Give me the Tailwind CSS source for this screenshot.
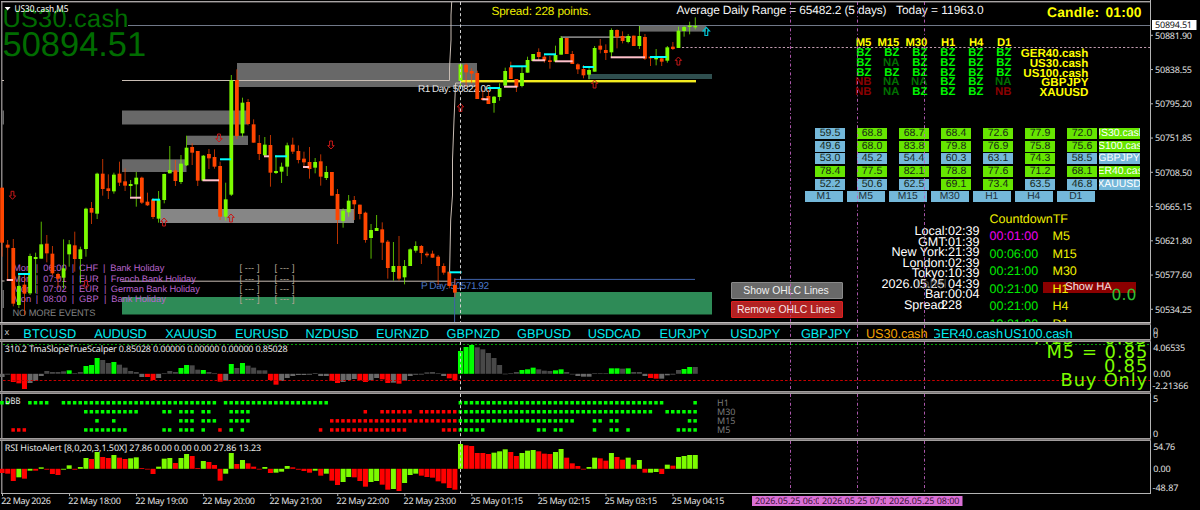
<!DOCTYPE html>
<html lang="en">
<head>
<meta charset="utf-8">
<title>US30.cash,M5</title>
<script src="https://cdn.jsdelivr.net/npm/@tailwindcss/browser@4"></script>
</head>
<body class="bg-black">
<main class="relative flex h-[510px] w-[1200px] flex-col overflow-hidden bg-black font-['Liberation_Sans',sans-serif] text-white [text-rendering:geometricPrecision]">

  <!-- price pane -->
  <section class="flex h-[322px]">
    <div class="relative w-[1151px] overflow-hidden border-r border-[#b4b4b4]">
      <svg id="price" class="absolute inset-0" width="1150" height="322" viewBox="0 0 1150 322">
        <rect x="1" y="1" width="1150" height="1.4" fill="#a8a4a4"/>
        <rect x="1.2" y="1" width="1.2" height="321" fill="#a8a4a4"/>
        <g fill="#686868">
          <rect x="2.4" y="110.5" width="1.6" height="14"/>
          <rect x="122" y="110.5" width="126" height="14"/>
          <rect x="122" y="159.3" width="64.5" height="12.7"/>
          <rect x="187" y="135.7" width="61" height="9.3"/>
          <rect x="237" y="63" width="240" height="24"/>
          <rect x="160" y="209" width="194" height="14" fill="#868686"/>
          <rect x="639" y="25.6" width="67" height="6"/>
          <rect x="561" y="36.3" width="70" height="1.7" fill="#808080"/>
          <rect x="2.4" y="290" width="1.6" height="18"/>
        </g>
        <rect x="588" y="74" width="124" height="5" fill="#2f4f4f"/>
        <path d="M122 297H455V292H712V314.5H122Z" fill="#2e8b57"/>
        <rect x="128" y="25" width="1022" height="1" fill="#707888"/>
        <path d="M2 80.5H4M122 80.5H449.5V68L451 40V15L451.7 2M2 281H4.5M122 281.2H449.5M449.6 272L450.7 220L452.5 195V160L454 120L455.6 83H460" fill="none" stroke="#c9bdb4"/>
        <path d="M454.6 322V279.4H695" fill="none" stroke="#3f62a8"/>
        <rect x="460" y="80" width="236" height="2.4" fill="#f4ec20"/>
        <path d="M682 47.5H1150" stroke="#c09aae" stroke-dasharray="2.2 2"/>
        <g id="labels" font-size="9.3">
          <text x="418" y="91.7" fill="#e4e4e4" font-size="10" textLength="73">R1 Day: 50822.06</text>
          <text x="421" y="289" fill="#4a78c8" font-size="10" textLength="68">P Day: 50571.92</text>
          <g fill="#b864cc">
            <text x="13" y="270.9">Mon</text><text x="35.7" y="270.9">|</text><text x="43.3" y="270.9">06:00</text><text x="71.7" y="270.9">|</text><text x="79" y="270.9">CHF</text><text x="103" y="270.9">|</text><text x="110.3" y="270.9" textLength="54">Bank Holiday</text>
            <text x="13" y="281.5">Mon</text><text x="35.7" y="281.5">|</text><text x="43.3" y="281.5">07:01</text><text x="71.7" y="281.5">|</text><text x="79" y="281.5">EUR</text><text x="104" y="281.5">|</text><text x="110.8" y="281.5" textLength="85">French Bank Holiday</text>
            <text x="13" y="291.9">Mon</text><text x="35.7" y="291.9">|</text><text x="43.3" y="291.9">07:02</text><text x="71.7" y="291.9">|</text><text x="79" y="291.9">EUR</text><text x="104" y="291.9">|</text><text x="110.8" y="291.9" textLength="89">German Bank Holiday</text>
            <text x="13" y="302.3">Mon</text><text x="35.7" y="302.3">|</text><text x="43.3" y="302.3">08:00</text><text x="71.7" y="302.3">|</text><text x="79" y="302.3">GBP</text><text x="104" y="302.3">|</text><text x="111.3" y="302.3" textLength="54.5">Bank Holiday</text>
          </g>
          <g fill="#b0a494">
            <text x="239.5" y="270.9" textLength="20">[ --- ]</text><text x="274.5" y="270.9" textLength="20">[ --- ]</text>
            <text x="239.5" y="281.5" textLength="20">[ --- ]</text><text x="274.5" y="281.5" textLength="20">[ --- ]</text>
            <text x="239.5" y="291.9" textLength="20">[ --- ]</text><text x="274.5" y="291.9" textLength="20">[ --- ]</text>
            <text x="239.5" y="302.3" textLength="20">[ --- ]</text><text x="274.5" y="302.3" textLength="20">[ --- ]</text>
          </g>
          <text x="12.4" y="316.4" fill="#808080" textLength="83">NO MORE EVENTS</text>
        </g>
        <g id="candles"></g>
        <g id="marks"></g>
        <text x="2.4" y="26.5" font-size="25.3" fill="#006c00" textLength="126">US30.cash</text>
        <text x="2.6" y="56.2" font-size="34.4" fill="#006c00" textLength="143.5">50894.51</text>
        <path d="M4.6 7H10.6L7.6 10.4Z" fill="#fff"/>
        <text x="14.5" y="12" font-size="9.4" fill="#fff" font-family="Noto Sans" textLength="54" lengthAdjust="spacingAndGlyphs">US30.cash,M5</text>
        <text x="491.4" y="14.9" font-size="11.8" fill="#f0f000" textLength="100">Spread: 228 points.</text>
        <text x="676.5" y="14" font-size="11.9" fill="#f4f4f4" textLength="210">Average Daily Range = 65482.2 (5 days)</text>
        <text x="896" y="14" font-size="11.9" fill="#f4f4f4" textLength="87.5">Today = 11963.0</text>
        <text x="1047" y="17.4" font-size="13.8" font-weight="bold" fill="#ff0" textLength="52">Candle:</text>
        <text x="1105.5" y="17.4" font-size="13.8" font-weight="bold" fill="#ff0" textLength="36">01:00</text>
      </svg>

      <!-- trend matrix -->
      <div class="absolute top-[39.2px] left-[843.4px] grid grid-cols-[repeat(6,28px)_77px] auto-rows-[9.8px] text-right text-[11.3px] leading-[9.8px] font-bold" id="matrix"></div>

      <!-- RSI heat map -->
      <div class="absolute top-[128.3px] left-[815px] flex flex-col gap-[1.6px]" id="heat"></div>
      <div class="absolute top-[191.4px] left-[805px] flex gap-[4.5px] text-[10.3px] leading-[11px] text-[#203038]" id="heatTf"></div>

      <!-- market clocks -->
      <div class="absolute top-[226.3px] left-[860px] flex w-[119.6px] flex-col text-right text-[12.6px] leading-[10.5px] whitespace-nowrap text-white">
        <span>Local:02:39</span><span>GMT:01:39</span><span>New York:21:39</span><span>London:02:39</span><span>Tokyo:10:39</span>
        <span class="relative">2026.05.25 04:39<span class="absolute right-[33px] text-[#777] opacity-60">Label</span></span>
        <span>Bar:00:04</span>
        <span class="relative pr-[17.5px]">228<span class="absolute right-[35px]">Spread</span></span>
      </div>

      <!-- candle countdown -->
      <div class="absolute top-[282px] left-[1043px] h-[11px] w-[93px] bg-[#8b0000]"></div>
      <div class="absolute top-[210.8px] left-[989.5px] text-[12.5px] leading-[17.5px]">
        <div class="text-[#f0f000]">CountdownTF</div>
        <div class="grid grid-cols-[63px_30px] text-[#00ec00]">
          <span class="text-[#f000f0]">00:01:00</span><span class="text-[#f0f000]">M5</span>
          <span>00:06:00</span><span class="text-[#f0f000]">M15</span>
          <span>00:21:00</span><span class="text-[#f0f000]">M30</span>
          <span>00:21:00</span><span class="text-[#f0f000]">H1</span>
          <span>00:21:00</span><span class="text-[#f0f000]">H4</span>
          <span>19:21:00</span><span class="text-[#f0f000]">D1</span>
        </div>
      </div>
      <div class="absolute top-[281px] left-[1065.3px] text-[11.1px] leading-[13px] text-[#f8e4e4]">Show HA</div>
      <div class="absolute top-[285px] left-[1111.5px] font-['DejaVu_Sans',sans-serif] text-[15.6px] leading-[20px] text-[#32c032]">0.0</div>

      <button class="absolute top-[281.5px] left-[731px] h-[17px] w-[112px] rounded-[1px] border border-[#8a8a8a] bg-[#696969] pr-[2px] text-[10.4px] leading-[15px] text-[#f0f0f0]">Show OHLC Lines</button>
      <button class="absolute top-[301.3px] left-[731px] h-[16.5px] w-[112px] rounded-[1px] border border-[#e02020] bg-[#b22222] pr-[2px] text-[10.4px] leading-[15px] whitespace-nowrap text-[#f8e8e8]">Remove OHLC Lines</button>
    </div>
    <svg width="49" height="322" viewBox="1151 0 49 322" class="font-['Noto_Sans',sans-serif]" fill="#e0e0e0" font-size="9">
      <rect x="1152" y="20" width="44.5" height="10" fill="#fff"/>
      <text x="1155" y="28.4" fill="#111" textLength="37">50894.51</text>
      <g id="priceScale"></g>
    </svg>
  </section>
  <div class="h-[3px] w-[1151px] border-t border-[#c0bcbc] bg-[#8c8888]"></div>

  <!-- symbol bar -->
  <section class="flex h-[14px]">
    <svg width="1151" height="14" viewBox="0 325 1151 14" fill="#00ecf0" font-size="12.8">
      <rect x="1.2" y="325" width="1.2" height="14" fill="#a8a4a4"/><rect x="1150" y="325" width="1" height="14" fill="#b4b4b4"/>
      <text x="4.4" y="335.3" font-size="9" fill="#ccc" font-family="Noto Sans">x</text>
      <text x="23.3" y="338" textLength="53">BTCUSD</text><text x="94.3" y="338" textLength="52.5">AUDUSD</text><text x="165.3" y="338" textLength="51.5">XAUUSD</text><text x="235" y="338" textLength="53.5">EURUSD</text><text x="305.6" y="338" textLength="53">NZDUSD</text><text x="376" y="338" textLength="53">EURNZD</text><text x="446.5" y="338" textLength="53.5">GBPNZD</text><text x="517" y="338" textLength="54">GBPUSD</text><text x="587.7" y="338" textLength="53">USDCAD</text><text x="659.5" y="338" textLength="50">EURJPY</text><text x="730.3" y="338" textLength="50">USDJPY</text><text x="801" y="338" textLength="50">GBPJPY</text>
      <text x="866" y="338" fill="#f0a000" textLength="61.5">US30.cash</text>
      <text x="931" y="338" textLength="72">GER40.cash</text><rect x="929" y="326" width="5" height="13" fill="#000"/>
      <text x="1004" y="338" textLength="68.5">US100.cash</text>
    </svg>
    <svg width="49" height="14" viewBox="1151 325 49 14" fill="#ccc" font-size="9" class="font-['Noto_Sans',sans-serif]"><text x="1153" y="334">0</text><text x="1153" y="337.5">0</text></svg>
  </section>
  <div class="h-[3px] w-[1151px] border-y border-[#a09c9c] bg-[#7c7878]"></div>

  <!-- slope histogram -->
  <section class="flex h-[49px]">
    <svg width="1151" height="49" viewBox="0 342 1151 49">
      <rect x="1.2" y="342" width="1.2" height="49" fill="#a8a4a4"/><rect x="1150" y="342" width="1" height="49" fill="#b4b4b4"/>
      <path d="M3 344.5H1150" stroke="#00a000" stroke-dasharray="2 2"/>
      <g id="slope"></g>
      <path d="M3 380.5H1150" stroke="#c80000" stroke-dasharray="2.6 2"/>
      <text x="4.7" y="352.3" font-size="9" fill="#e8e8e8" font-family="Noto Sans" textLength="283">310.2 TmaSlopeTrueScalper 0.85028 0.00000 0.00000 0.00000 0.85028</text>
      <g fill="#7cfc00" font-family="DejaVu Sans" font-size="17.9">
        <text x="1034" y="344.4" textLength="113">M15 = 0.85</text>
        <text x="1046.4" y="358" textLength="101">M5 = 0.85</text>
        <text x="1104" y="372.4" textLength="43.5">0.85</text>
        <text x="1060.6" y="386.4" textLength="86.5">Buy Only</text>
      </g>
    </svg>
    <svg width="49" height="49" viewBox="1151 342 49 49" fill="#e0e0e0" font-size="9" class="font-['Noto_Sans',sans-serif]"><text x="1153.2" y="350.7" textLength="32">4.06535</text><text x="1153.2" y="377.3" textLength="17.5">0.00</text><text x="1152.5" y="389.3" textLength="36">-2.21366</text></svg>
  </section>
  <div class="h-[3px] w-[1151px] border-y border-[#a09c9c] bg-[#7c7878]"></div>

  <!-- DBB dots -->
  <section class="flex h-[44px]">
    <svg width="1151" height="44" viewBox="0 394 1151 44">
      <rect x="1.2" y="394" width="1.2" height="44" fill="#a8a4a4"/><rect x="1150" y="394" width="1" height="44" fill="#b4b4b4"/>
      <g id="dots"></g>
      <text x="4.9" y="403.6" font-size="9" fill="#e8e8e8" font-family="Noto Sans" textLength="15.5" lengthAdjust="spacingAndGlyphs">DBB</text>
      <g font-size="9" fill="#7a7a7a" font-family="Noto Sans"><text x="717" y="405.8">H1</text><text x="717" y="414.9">M30</text><text x="717" y="424">M15</text><text x="717" y="433">M5</text></g>
    </svg>
    <svg width="49" height="44" viewBox="1151 394 49 44" fill="#e0e0e0" font-size="9" class="font-['Noto_Sans',sans-serif]"><text x="1153" y="402.4">5</text><text x="1153" y="436.7">0</text></svg>
  </section>
  <div class="h-[3px] w-[1151px] border-y border-[#a09c9c] bg-[#7c7878]"></div>

  <!-- RSI histogram -->
  <section class="flex h-[53px]">
    <svg width="1151" height="53" viewBox="0 441 1151 53">
      <rect x="1.2" y="441" width="1.2" height="53" fill="#a8a4a4"/><rect x="1150" y="441" width="1" height="53" fill="#b4b4b4"/>
      <g id="rsi"></g>
      <rect x="1" y="493" width="1150" height="1" fill="#b4b4b4"/>
      <text x="4.7" y="451.4" font-size="9" fill="#e8e8e8" font-family="Noto Sans" textLength="256.5">RSI HistoAlert [8,0,20,3,1.50X] 27.86 0.00 0.00 0.00 27.86 13.23</text>
    </svg>
    <svg width="49" height="53" viewBox="1151 441 49 53" fill="#e0e0e0" font-size="9" class="font-['Noto_Sans',sans-serif]"><text x="1153.2" y="450" textLength="22">54.76</text><text x="1153.2" y="472.3" textLength="17.5">0.00</text><text x="1152.5" y="491.3" textLength="26">-48.87</text></svg>
  </section>

  <!-- time axis -->
  <section class="h-[16px]">
    <svg width="1200" height="16" viewBox="0 494 1200 16" fill="#e0e0e0" font-size="9" font-family="Noto Sans">
      <g id="timeAxis"></g>
      <g id="events"></g>
    </svg>
  </section>

  <!-- vertical guides -->
  <svg class="pointer-events-none absolute inset-0" width="1200" height="510" viewBox="0 0 1200 510" fill="none">
    <path d="M460.5 2V322M460.5 342V391M460.5 394V438M460.5 441V493" stroke="#d0d0d0" stroke-dasharray="3 2.6"/>
    <path d="M790.5 2V322M857.5 2V322M924.5 2V322M790.5 325V339M857.5 325V339M924.5 325V339M790.5 342V391M857.5 342V391M924.5 342V391M790.5 394V438M857.5 394V438M924.5 394V438M790.5 441V493M857.5 441V493M924.5 441V493" stroke="#c060c0" stroke-opacity=".9" stroke-dasharray="3 2.4 1 2.4"/>
  </svg>
</main>

<script>
const NS = 'http://www.w3.org/2000/svg';
const $ = id => document.getElementById(id);
const add = (id, tag, attrs, text) => {
  const e = document.createElementNS(NS, tag);
  for (const k in attrs) e.setAttribute(k, attrs[k]);
  if (text) e.textContent = text;
  $(id).appendChild(e);
};
const X = k => 2.1 + 5.59 * k;
const GREEN = '#7cfc00', RED = '#ff4500';

// candles: direction, high, body top, body bottom, low (third-pixel units)
const early = `r83 83 248 290|r240 254 263 360|r237 264 431 439|g345 378 435 444|r340 374 401 465|g281 288 400 405|g278 291 297 400|g185 253 296 296|r225 251 280 307|r258 281 340 345|r338 342 356 385|g238 325 353 385|g240 253 283 320|r215 256 297 335|g260 268 297 370|g143 146 267 290|r126 144 158 192|g38 41 161 177|r-3 41 87 107|r43 85 93 117|g38 44 94 101|r5 41 68 78|r25 64 77 93|g60 72 78 110|g36 53 73 140|r50 53 128 132|r98 125 136 138|r115 118 171 177|g93 120 176 188|g41 42 120 130|g-42 30 40 40|r0 31 63 78|g-15 11 66 72|g-73 -37 16 18|r-50 -39 -22 15|r-27 -27 62 78|g-15 -13 62 62|r-33 -18 -5 27|r-32 -9 20 26|r5 18 170 180|g68 118 170 182|g-255 -239 104 108|r-272 -240 -72 -63`;
const late = `g293 308 400 410|r297 306 372 376|r358 373 428 428|r405 429 462 480|g411 434 466 468|r405 435 518 560|g465 513 519 522|g488 500 515 549|g428 436 500 528|r413 434 455 462|r436 453 480 490|r455 476 487 500|r441 486 507 536|g474 486 503 520|r463 484 530 557|g498 516 534 540|r516 516 587 587|r567 582 660 732|g625 632 663 683|g585 602 637 650|r588 600 613 660|r614 614 642 658|r635 638 720 728|g672 690 714 776|g645 684 693 693|r667 688 728 780|r720 725 804 836|g726 798 816 842|r708 798 836 842|g780 798 832 853|g745 748 798 798|g724 738 752 758|r735 738 759 792|r755 761 766 772|r752 761 773 773|r765 770 798 855|r790 798 818 824|r815 815 858 865|r834 855 878 892|g190 193 243 258|r190 194 217 260|r205 213 221 250|r212 219 297 297|r270 294 300 300|r270 288 312 312|g288 290 309 338|g250 264 291 302|g203 213 257 257|r185 202 237 237|r237 237 261 276|g200 219 258 262|g170 180 218 218|g162 162 183 183|r145 156 171 180|r165 170 182 188|r168 181 186 206|g137 165 185 185|g108 114 164 164|r114 114 162 162|r153 162 192 192|r190 193 208 222|r195 207 226 235|g200 210 224 238|g138 144 215 215|r117 137 149 160|r133 150 159 180|g85 90 157 172|r88 90 112 145|r94 108 123 130|g102 108 126 130|r107 107 138 138|g78 108 138 147|r102 111 176 180|r170 170 175 198|g147 172 178 196|r170 175 185 198|g138 142 182 188|r126 140 147 150|g80 92 144 144|g78 81 93 110|g65 77 81 103|g52 78 82 88`;
const rows = [...early.split('|').map(s => [s, 480]), ...late.split('|').map(s => [s, 0])];
rows.forEach(([s, off], k) => {
  const c = s[0] === 'g' ? GREEN : RED;
  const [h, t, b, l] = s.slice(1).split(' ').map(v => (+v + off) / 3);
  add('candles', 'rect', {x: X(k) - .45, y: h, width: .9, height: Math.max(l - h, .5), fill: c, opacity: .8});
  add('candles', 'rect', {x: X(k) - 1.9, y: t, width: 3.8, height: Math.max(b - t, 1), fill: c});
});

// fractal levels
[[6.7,13,280],[130,141,197.7],[202.5,219,180.3],[264,269,156.3],[303,309,167],[482.3,488.3,99.3],[504,517.3,86.7],[532.3,545,60.3],[555,572.7,61.3],[610.7,645,57.3]]
  .forEach(([a, b, y]) => add('marks', 'rect', {x: a, y: y - 1, width: b - a, height: 2, fill: '#ffc0cb'}));
[[18,30,274],[152,160,199.7],[220,231,159.3],[275,287,156.3],[449.5,461.5,272.3],[487.7,500,88],[510,526.7,66.3],[544,556,54.3],[582.7,594,67],[650,666.7,57]]
  .forEach(([a, b, y]) => add('marks', 'rect', {x: a, y: y - 1, width: b - a, height: 2, fill: '#00ffff'}));
const UP = 'M0-4L3.2-.6H1.4V4H-1.4V-.6H-3.2Z';
[[164,222],[231,218],[460.5,107.5],[594.6,84],[678.4,61]].forEach(([x, y]) => add('marks', 'path', {d: UP, transform: `translate(${x} ${y})`, fill: 'none', stroke: '#c81818', 'stroke-width': 1}));
[[12.5,195.3],[219,138],[331,145],[86,284.5]].forEach(([x, y]) => add('marks', 'path', {d: UP, transform: `translate(${x} ${y}) rotate(180)`, fill: 'none', stroke: '#c81818', 'stroke-width': 1}));
add('marks', 'path', {d: UP, transform: 'translate(706.3 31.5)', fill: 'none', stroke: '#00c0d0', 'stroke-width': 1.2});

// price scale
['50881.90','50838.55','50795.20','50751.85','50708.50','50665.15','50621.80','50577.60','50534.25'].forEach((t, i) => {
  const y = 35.3 + 34.25 * i;
  add('priceScale', 'rect', {x: 1151, y: y - .5, width: 2, height: 1, fill: '#b4b4b4'});
  add('priceScale', 'text', {x: 1155, y: y + 3.2, textLength: 37}, t);
});

// histograms
const bars = (id, base, data, col) => data.split(' ').forEach((s, k) => {
  const y = 320 + +s.slice(1) / 3;
  add(id, 'rect', {x: X(k) - 2.5, y: Math.min(y, base), width: 5, height: Math.max(Math.abs(y - base), .7), fill: col[s[0]]});
});
bars('slope', 373.8, 's171 s163 r186 r190 r207 s189 s183 s168 d153 d156 d156 d154 g151 d160 d156 g138 g135 g114 d120 d129 g126 d134 d143 d153 d156 s171 r171 r180 s174 d160 d153 d156 g144 g135 d136 d149 g150 d156 d160 r185 s182 g132 d144 g129 d137 d143 d151 d151 r180 r194 s183 s174 s168 s165 s165 s164 d159 s168 s168 r183 r189 s186 s180 s177 r181 r186 s181 s174 r178 r189 s188 r191 s182 s168 s164 s163 d157 d156 d160 s168 r175 r181 g93 g81 g75 d82 d88 d99 d114 d135 d161 d160 d156 g150 g148 g143 d148 d152 d153 g151 g148 d156 d163 s168 s170 s170 d160 d160 d160 g145 g145 d146 g145 d156 d156 s168 r174 r176 s176 s166 s163 d150 g147 g141 d141',
  {s: '#696969', d: '#484848', g: '#00ff00', r: '#ff0000'});
bars('rsi', 468.8, 'r459 r461 r483 g472 r476 g452 r452 g442 r449 r462 r465 g449 g436 r449 g441 g414 r417 g396 r411 r414 g405 r413 r417 g415 g412 r444 r448 r462 g440 g416 g414 r429 g414 g402 r408 r444 g423 r426 r435 r482 g461 g399 r432 g420 r430 r440 r448 g441 r459 g458 g455 g438 r442 r449 r453 r458 g452 r467 g461 r482 r495 g486 g471 r472 r483 r500 g486 g483 r494 r509 g507 r513 g489 g465 g461 r467 r471 r473 r484 r490 r504 r509 g372 r376 r378 r399 r399 r402 g398 g394 g388 r396 r408 g399 g392 g390 r394 r401 r402 g396 g387 r413 r430 r438 r448 g441 g413 r415 r422 g399 r411 r419 g413 r434 g420 r458 g458 g456 r462 g434 r437 g411 g408 g405 g405',
  {g: GREEN, r: '#ff0000'});

// dot rows: [y, colour, bar ranges]
[[402.7,'#0f0','0-1 5-8 11-38 40-58 82-118 124-124'],
 [411.7,'#0f0','15-24 29-30 32-34 36-37 41-44 82-116 119-124'],[411.7,'#f00','65-65 68-73 75-81'],
 [420.8,'#0f0','17-17 20-20 32-34 36-38 41-44 82-102 106-107 109-110 123-124'],[420.8,'#f00','59-81'],
 [429.9,'#0f0','15-22 29-30 32-34 36-36 41-41 43-43 82-86 96-97 99-100 106-106 109-110 112-112 121-124'],[429.9,'#f00','2-4 39-39 57-57 59-72 79-81']]
.forEach(([y, c, r]) => r.split(' ').forEach(p => {
  const [a, b] = p.split('-').map(Number);
  for (let k = a; k <= b; k++) add('dots', 'rect', {x: X(k) - 1.9, y: y - 1.7, width: 3.5, height: 3.5, fill: c});
}));

// time axis
['22 May 2026','22 May 18:00','22 May 19:00','22 May 20:00','22 May 21:00','22 May 22:00','22 May 23:00','25 May 01:15','25 May 02:15','25 May 03:15','25 May 04:15'].forEach((t, i) => {
  add('timeAxis', 'rect', {x: 2 + 67.05 * i, y: 494, width: 1, height: 2, fill: '#b4b4b4'});
  add('timeAxis', 'text', {x: 1.3 + 67.05 * i, y: 504.4, textLength: i ? 52.5 : 49.5}, t);
});
['06:00','07:00','08:00'].forEach((t, i) => {
  add('events', 'rect', {x: 752 + 67 * i, y: 496, width: 76.5, height: 10, fill: '#da70d6'});
  add('events', 'text', {x: 755 + 67 * i, y: 504.4, textLength: 70.5, fill: '#3a1038'}, '2026.05.25 ' + t);
});

// trend matrix
const tone = {BZ: 'text-[#00f800]', NA: 'text-[#007000]', NB: 'text-[#8b0000]'};
let m = '';
['M5','M15','M30','H1','H4','D1',''].forEach(t => m += `<span class="text-[#ff0]">${t}</span>`);
[['BZ','BZ','BZ','BZ','BZ','BZ','GER40.cash'],['BZ','NA','BZ','BZ','BZ','BZ','US30.cash'],['BZ','BZ','BZ','BZ','BZ','BZ','US100.cash'],['NB','NA','NA','BZ','BZ','NA','GBPJPY'],['NB','NA','BZ','BZ','BZ','NB','XAUUSD']]
  .forEach(r => r.forEach(t => m += `<span class="${tone[t] || 'text-[#ff0] text-[11.6px]'}">${t}</span>`));
$('matrix').innerHTML = m;

// heat map
const cell = v => `<span class="h-[11px] w-[30px] text-center ${v >= 65 ? 'bg-[#66e600]' : 'bg-[#74b8da]'}">${v.toFixed(1)}</span>`;
$('heat').innerHTML = [[[59.5,68.8,68.7,68.4,72.6,77.9,72.0],'US30.cash','g'],[[49.6,68.0,83.8,79.8,76.9,75.8,75.6],'US100.cash','g'],[[53.0,45.2,54.4,60.3,63.1,74.3,58.5],'GBPJPY','b'],[[78.4,77.5,82.1,78.8,77.6,71.2,68.1],'GER40.cash','g'],[[52.2,50.6,62.5,69.1,73.4,63.5,46.8],'XAUUSD','b']]
  .map(([v, n, c]) => `<div class="flex gap-[12px] text-[10.5px] leading-[11.5px] text-[#182818]">${v.map(cell).join('')}<span class="-ml-[10.5px] flex h-[11px] w-[41px] justify-center overflow-hidden text-white ${c === 'g' ? 'bg-[#66e600]' : 'bg-[#74b8da]'}">${n}</span></div>`).join('');
$('heatTf').innerHTML = ['M1','M5','M15','M30','H1','H4','D1'].map(t => `<span class="h-[11px] w-[37.5px] bg-[#74b8da] text-center">${t}</span>`).join('');
</script>
</body>
</html>
